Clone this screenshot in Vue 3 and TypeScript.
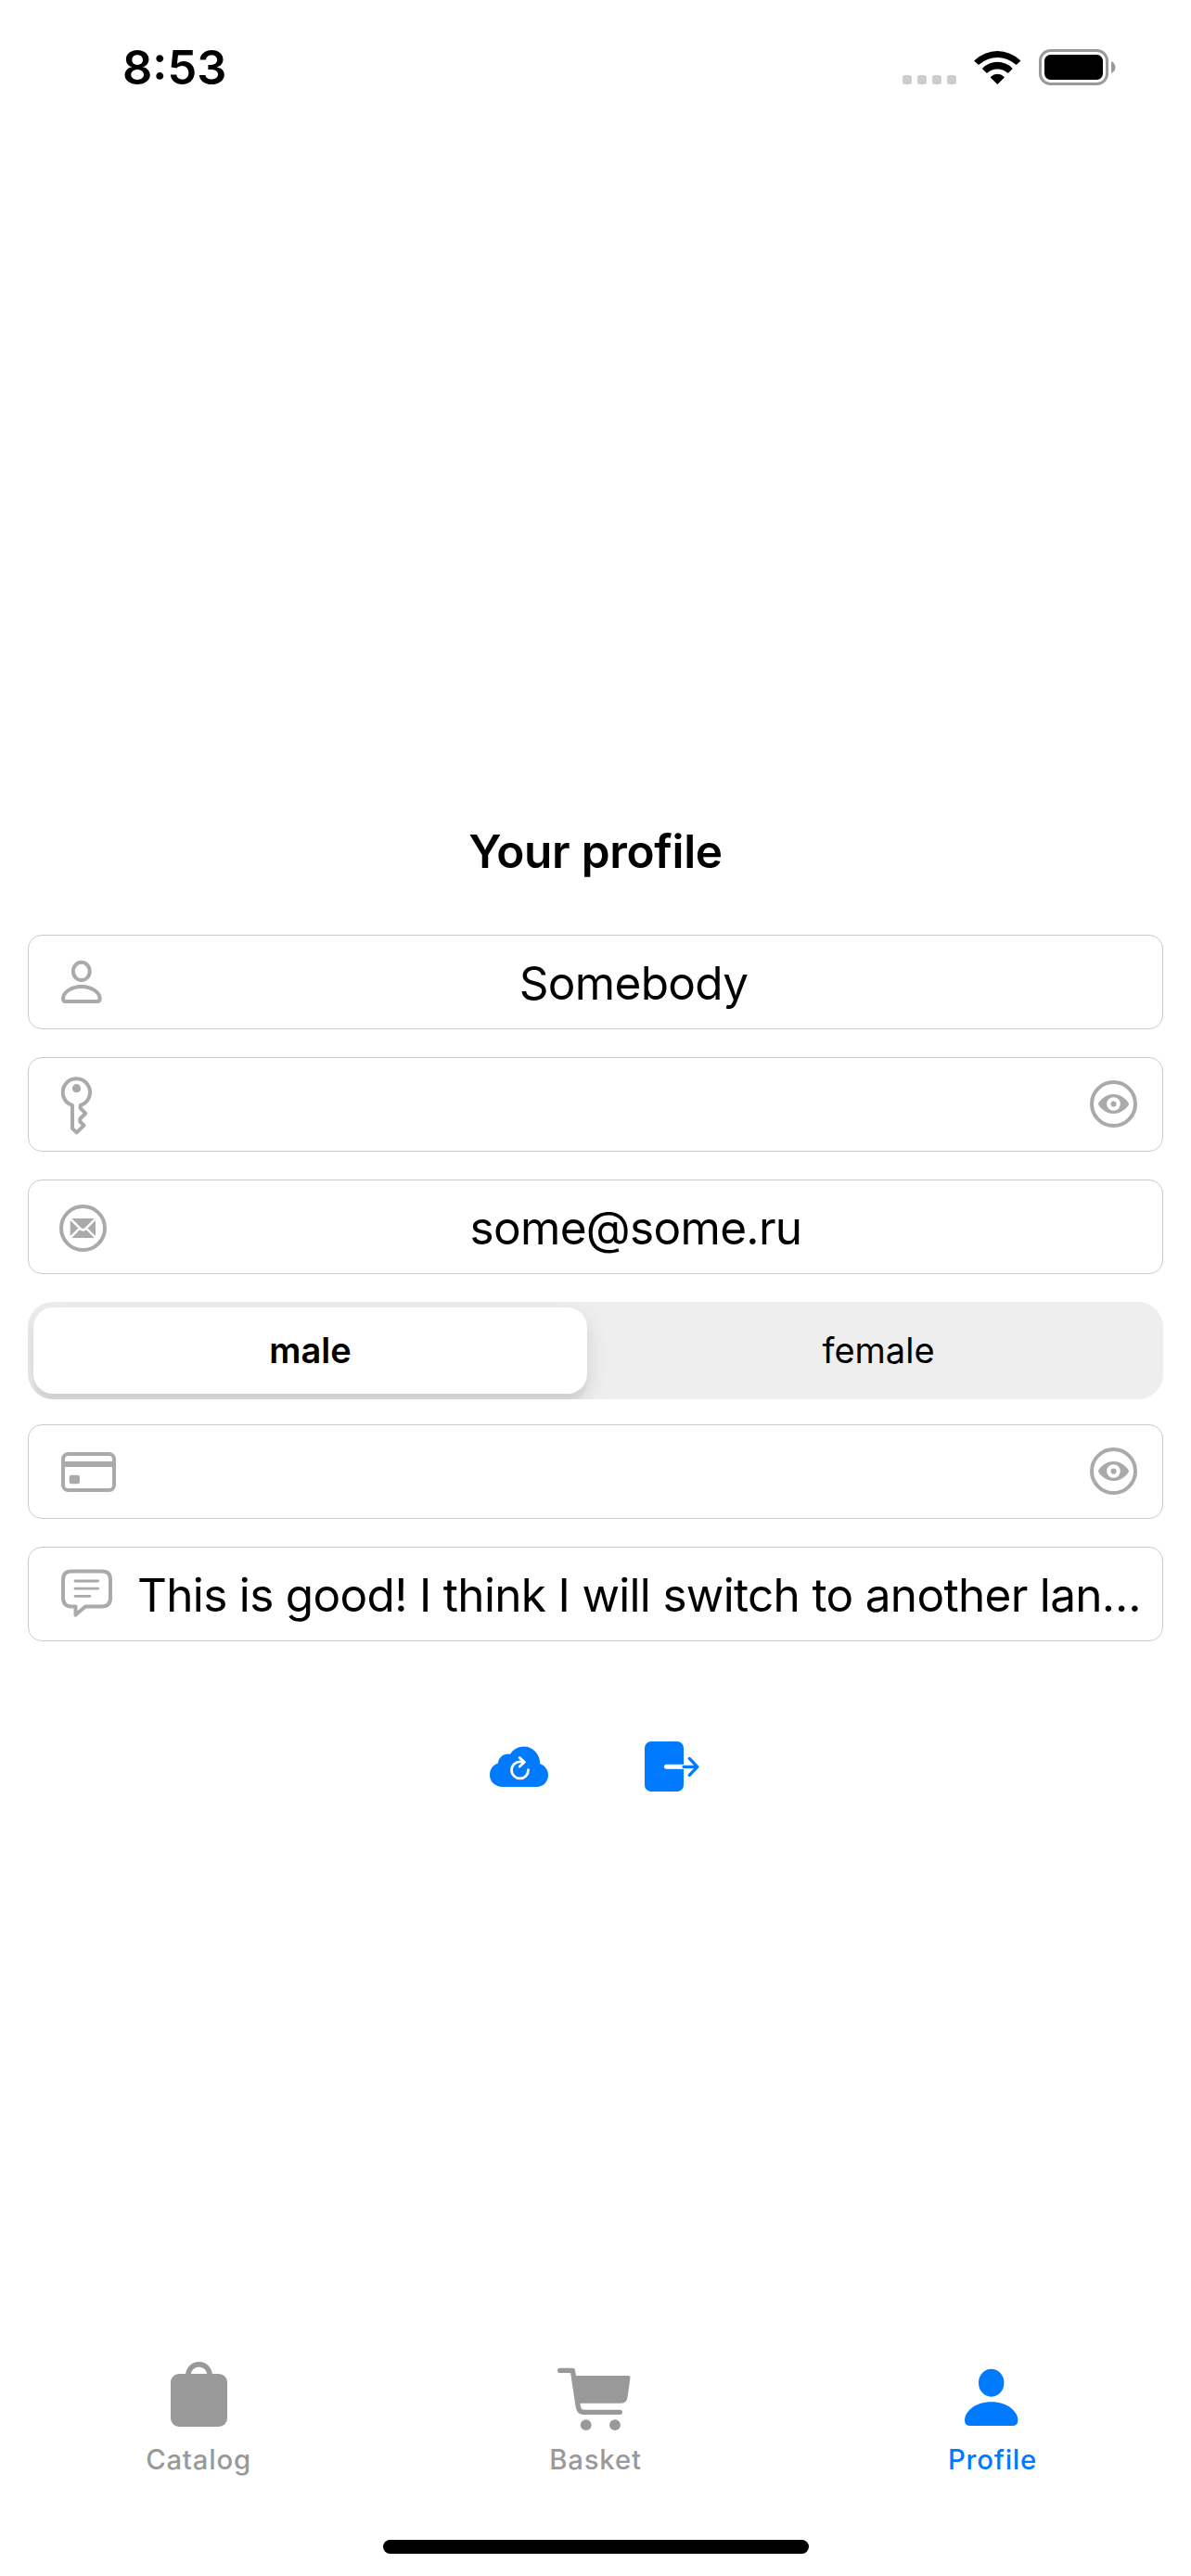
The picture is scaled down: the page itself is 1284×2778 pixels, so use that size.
<script setup lang="ts">
import { ref } from 'vue'

type Gender = 'male' | 'female'
type IconName = 'person' | 'key' | 'mail' | 'card' | 'note'

interface Field {
  id: string
  icon: IconName
  width: number
  height: number
  value: string
  secure?: boolean
}

const identity: Field[] = [
  { id: 'name', icon: 'person', width: 44, height: 47, value: 'Somebody' },
  { id: 'password', icon: 'key', width: 34, height: 63, value: '', secure: true },
  { id: 'email', icon: 'mail', width: 51, height: 51, value: 'some@some.ru' },
]
const details: Field[] = [
  { id: 'number', icon: 'card', width: 59, height: 43, value: '', secure: true },
  { id: 'bio', icon: 'note', width: 55, height: 52, value: 'This is good! I think I will switch to another lan…' },
]
const groups = [identity, details]
const genders: Gender[] = ['male', 'female']
const gender = ref<Gender>('male')
</script>

<template>
  <div class="screen">
    <header class="status">
      <span class="time">8:53</span>
      <div class="indicators">
        <div class="cell"><i v-for="n in 4" :key="n"></i></div>
        <svg class="wifi" width="51" height="38" viewBox="0 0 51 38">
          <path d="M.7 11A35.5 35.5 0 0 1 49.9 11Q50.6 11.4 50 12L46.2 15.6Q45.6 16 45 15.5A29.8 29.8 0 0 0 5.6 15.5Q5 16 4.4 15.6L.6 12Q0 11.4 .7 11Z" />
          <path d="M9.4 19.4A22.5 22.5 0 0 1 41.2 19.4Q41.9 20 41.3 20.6L37.2 24.6Q36.6 25 36 24.6A15.9 15.9 0 0 0 14.6 24.6Q14 25 13.4 24.6L9.3 20.6Q8.7 20 9.4 19.4Z" />
          <path d="M18.2 28.8A10 10 0 0 1 32.4 28.8Q33 29.3 32.4 29.9L25.3 37L18.2 29.9Q17.6 29.3 18.2 28.8Z" />
        </svg>
        <svg class="battery" width="83" height="39" viewBox="0 0 83 39">
          <rect x="1.5" y="1.5" width="72" height="36" rx="11" fill="none" stroke="#999" stroke-width="3" />
          <rect x="6" y="6" width="63" height="27" rx="6.5" />
          <path d="M78 13Q82.4 15 82.4 19.5T78 26Z" fill="#999" />
        </svg>
      </div>
    </header>

    <main class="profile">
      <h1>Your profile</h1>
      <template v-for="(group, g) in groups" :key="g">
        <div v-for="field in group" :key="field.id" class="field">
          <svg class="icon" :width="field.width" :height="field.height" :viewBox="`0 0 ${field.width} ${field.height}`" :class="field.icon">
            <template v-if="field.icon === 'person'">
              <ellipse cx="21.8" cy="12.4" rx="8.9" ry="9.7" />
              <path d="M5 45H38.7Q41.7 45 41.7 42C41.7 36 34 29 21.8 29S2 36 2 42Q2 45 5 45Z" />
            </template>
            <template v-else-if="field.icon === 'key'">
              <path d="M20.7 31A14.7 14.7 0 1 0 12 31V56L16.7 60.4L24.5 52.7L20.3 48.5V45.5L26.2 39.7L20.7 34.2Z" />
              <circle class="solid" cx="16.5" cy="12.7" r="4.6" />
            </template>
            <template v-else-if="field.icon === 'mail'">
              <circle cx="25.5" cy="25.5" r="23.5" />
              <path class="solid" d="M13.3 14.9H37.7L27.6 24.9Q25.5 27 23.4 24.9ZM11.7 17L20.3 25.5L11.7 34ZM39 17L30.5 25.5L39 34ZM13.3 36L22 27.3Q25.5 30.4 29 27.3L37.7 36Z" />
            </template>
            <template v-else-if="field.icon === 'card'">
              <rect x="2" y="2" width="55" height="39" rx="5.5" />
              <path class="solid" d="M2 10H57V16H2Z" />
              <rect class="solid" x="8.7" y="24.7" width="11.3" height="9.6" rx="2.4" />
            </template>
            <template v-else>
              <path d="M11 2.4H44Q53 2.4 53 11.5V31.3Q53 40.4 44 40.4H26L15.5 49.6V40.4H11Q2 40.4 2 31.3V11.5Q2 2.4 11 2.4Z" />
              <path class="thin" d="M15 13H39.7M15 21.1H39.7M15 29.3H31" />
            </template>
          </svg>
          <span class="value" :class="field.id">{{ field.value }}</span>
          <svg v-if="field.secure" class="icon eye" width="51" height="51" viewBox="0 0 51 51">
            <circle cx="25.5" cy="25.5" r="23.5" />
            <path class="solid" fill-rule="evenodd" d="M9 25.5C9 23.5 16 15 25.5 15S42 23.5 42 25.5S35 36 25.5 36S9 27.5 9 25.5ZM25.5 18.2A7.3 7.3 0 1 0 25.5 32.8A7.3 7.3 0 1 0 25.5 18.2Z" />
            <circle class="solid" cx="25.5" cy="25.5" r="3.1" />
          </svg>
        </div>
        <div v-if="g === 0" class="segmented">
          <button v-for="option in genders" :key="option" :class="{ selected: gender === option }" @click="gender = option">{{ option }}</button>
        </div>
      </template>

      <div class="actions">
        <svg width="63" height="44" viewBox="0 0 63 44">
          <path fill="#007aff" d="M14.3 44C5.8 44 0 38.5 0 31.3C0 24.8 3.8 19.8 8.9 18.5C9.5 12 15 7.2 22 8.7C25 3.5 30.5 .4 37 .4C46.5 .4 54.4 8.5 54.3 19.3C59.8 21 63 26 63 31.2C63 38.5 57.5 44 50.3 44Z" />
          <path class="reload" d="M41.5 25.7A9 9 0 1 1 32.6 16.9H36.5M32.2 12.5L37.4 17.2L32.2 22" />
        </svg>
        <svg width="59" height="54" viewBox="0 0 59 54">
          <rect width="42" height="54" rx="7" fill="#007aff" />
          <path d="M42 27.3H23.5" fill="none" stroke="#fff" stroke-width="5" stroke-linecap="round" />
          <path d="M43 24H46V31H43Z" fill="#fff" />
          <path d="M42 27.3H56M48.3 18.4L56.8 27.3L48.3 36.3" fill="none" stroke="#007aff" stroke-width="3.3" stroke-linecap="round" stroke-linejoin="round" />
        </svg>
      </div>
    </main>

    <nav class="tabs">
      <a>
        <svg width="61" height="76" viewBox="0 0 61 76">
          <rect y="14" width="61" height="57" rx="9" />
          <path d="M18.8 15.5A11.7 11.7 0 0 1 42.2 15.5" fill="none" stroke="currentColor" stroke-width="5.4" />
        </svg>
        <span>Catalog</span>
      </a>
      <a>
        <svg width="84" height="76" viewBox="0 -7 84 76">
          <path d="M18.5 9H77.3Q79.7 9 79.4 11.4L76.6 32Q75.6 38.7 70 38.7H23Z" />
          <path d="M3.7 3.4H17.4L23.2 42Q24.2 48.3 29 48.3H68.3" fill="none" stroke="currentColor" stroke-width="5.3" stroke-linecap="round" stroke-linejoin="round" />
          <circle cx="31.7" cy="62.2" r="5.9" />
          <circle cx="63" cy="62.2" r="5.9" />
        </svg>
        <span>Basket</span>
      </a>
      <a class="active">
        <svg width="60" height="76" viewBox="0 -8 60 76">
          <ellipse cx="28.7" cy="15.7" rx="13.7" ry="15" />
          <path d="M6 62Q0 62 0 56C0 47 11 36.3 28.7 36.3S57.4 47 57.4 56Q57.4 62 51.4 62Z" />
        </svg>
        <span>Profile</span>
      </a>
    </nav>
    <div class="home"></div>
  </div>
</template>

<style>
body {
  margin: 0;
  background: #fff;
}
</style>

<style scoped>
.screen {
  display: flex;
  flex-direction: column;
  box-sizing: border-box;
  width: 1284px;
  height: 2778px;
  overflow: hidden;
  background: #fff;
  color: #000;
  font-family: Inter, "Liberation Sans", sans-serif;
}
.status {
  display: flex;
  justify-content: space-between;
  height: 120px;
  padding: 0 81px 0 132px;
  box-sizing: border-box;
}
.time {
  margin-top: 43px;
  font-size: 50.5px;
  line-height: 60px;
  font-weight: 600;
}
.indicators {
  display: flex;
  align-items: flex-start;
}
.cell {
  display: flex;
  gap: 6px;
  margin: 81px 19px 0 0;
}
.cell i {
  width: 10px;
  height: 10px;
  border-radius: 3px;
  background: #ccc;
}
.wifi {
  margin: 54px 19px 0 0;
}
.battery {
  margin-top: 53px;
}
.profile {
  display: flex;
  flex-direction: column;
  padding: 768px 30px 0;
}
h1 {
  margin: 0 0 60px;
  text-align: center;
  font-size: 49.5px;
  line-height: 60px;
  font-weight: 600;
  letter-spacing: -0.3px;
}
.field {
  display: flex;
  align-items: center;
  box-sizing: border-box;
  height: 102px;
  margin-bottom: 30px;
  padding: 0 27px 0 35px;
  border: 1px solid #ccc;
  border-radius: 15px;
}
.icon {
  flex: none;
  fill: none;
  stroke: #aaa;
  stroke-width: 4;
  stroke-linejoin: round;
}
.icon .solid {
  fill: #aaa;
  stroke: none;
}
.icon .thin {
  stroke-width: 2.8;
  stroke-linecap: round;
}
.person,
.eye {
  margin-bottom: 1px;
}
.key {
  margin-top: 3px;
}
.mail {
  margin: 3px 0 0 -2px;
}
.card {
  margin-top: 1px;
}
.note {
  margin-bottom: 2px;
}
.value {
  flex: 1;
  margin: 2px 0 0 30px;
  text-align: center;
  white-space: nowrap;
  font-size: 49.5px;
  line-height: 60px;
  letter-spacing: -0.68px;
}
.bio {
  margin-left: 27px;
  text-align: left;
}
.segmented {
  display: flex;
  box-sizing: border-box;
  height: 105px;
  margin-bottom: 27px;
  padding: 6px;
  border-radius: 27px;
  background: #eee;
  overflow: hidden;
}
.segmented button {
  flex: 1;
  padding: 0 0 0 13px;
  border: 0;
  border-radius: 21px;
  background: none;
  color: #000;
  font: 400 38px/93px Inter, "Liberation Sans", sans-serif;
}
.segmented .selected {
  flex: 0 0 597px;
  padding: 0;
  background: #fff;
  font-weight: 600;
  box-shadow: 0 9px 24px rgba(0, 0, 0, 0.12), 0 9px 3px rgba(0, 0, 0, 0.04);
}
.actions {
  display: flex;
  align-items: center;
  gap: 104px;
  margin: 78px 0 0 498px;
}
.reload {
  fill: none;
  stroke: #fff;
  stroke-width: 2.8;
  stroke-linecap: round;
  stroke-linejoin: round;
}
.tabs {
  display: grid;
  grid-template-columns: repeat(3, 1fr);
  margin-top: auto;
  color: #999;
}
.tabs a {
  display: flex;
  flex-direction: column;
  align-items: center;
  gap: 16px;
  font-size: 29.3px;
  line-height: 30px;
  font-weight: 500;
  letter-spacing: 0.8px;
}
.tabs svg {
  fill: currentColor;
}
.tabs .active {
  color: #007aff;
}
.home {
  flex: none;
  width: 459px;
  height: 15px;
  margin: 71px 0 24px 413px;
  border-radius: 8px;
  background: #000;
}
</style>
